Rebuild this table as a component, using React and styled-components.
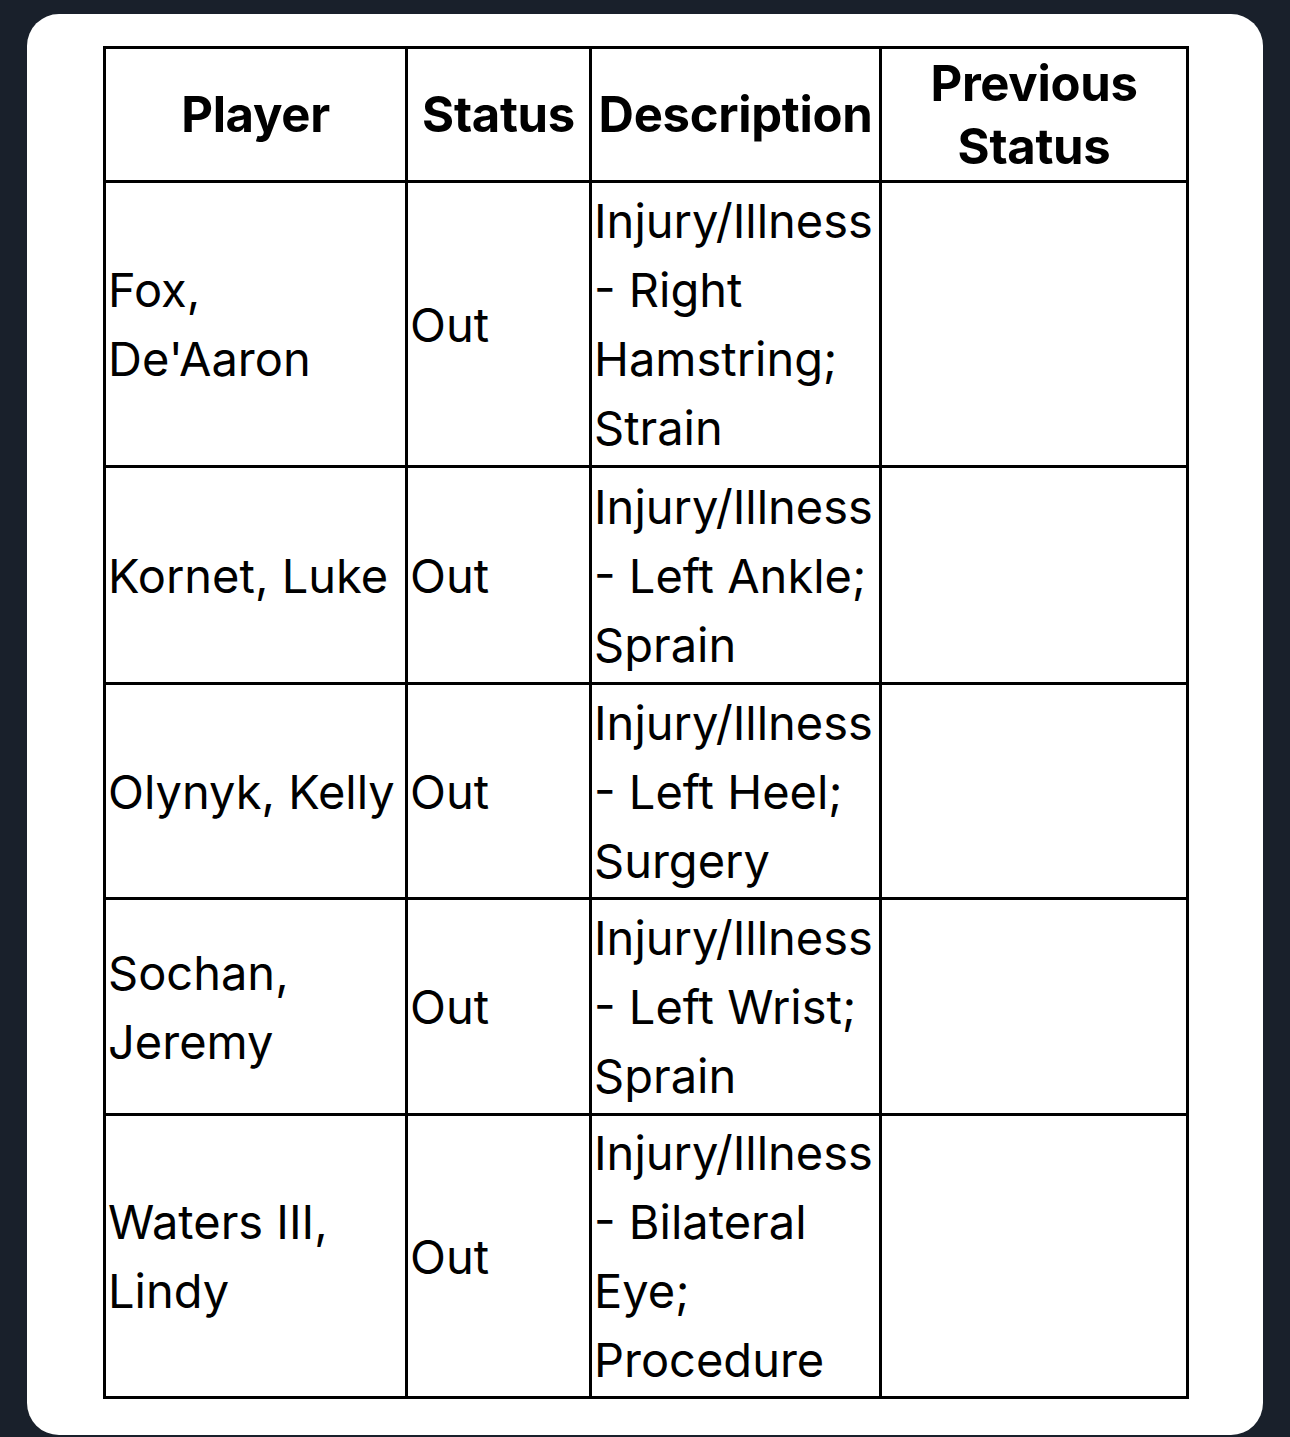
import React from 'react'
import { styled, createGlobalStyle } from 'styled-components'

const rows = [
  { player: ['Fox,', "De'Aaron"], status: 'Out', desc: ['Injury/Illness', '- Right', 'Hamstring;', 'Strain'], height: 285 },
  { player: ['Kornet, Luke'], status: 'Out', desc: ['Injury/Illness', '- Left Ankle;', 'Sprain'], height: 217 },
  { player: ['Olynyk, Kelly'], status: 'Out', desc: ['Injury/Illness', '- Left Heel;', 'Surgery'], height: 215 },
  { player: ['Sochan,', 'Jeremy'], status: 'Out', desc: ['Injury/Illness', '- Left Wrist;', 'Sprain'], height: 216 },
  { player: ['Waters III,', 'Lindy'], status: 'Out', desc: ['Injury/Illness', '- Bilateral', 'Eye;', 'Procedure'], height: 283 },
]

function Lines({ items }) {
  return items.map((t, i) => <Line key={i}>{t}</Line>)
}

function App() {
  return (
    <>
      <GlobalStyle />
      <Page>
        <Card>
          <Table>
            <colgroup>
              <col style={{ width: 302 }} />
              <col style={{ width: 184 }} />
              <col style={{ width: 290 }} />
              <col style={{ width: 307 }} />
            </colgroup>
            <thead>
              <Row $height={134}>
                <Head>Player</Head>
                <Head>Status</Head>
                <Head>Description</Head>
                <Head><Lines items={['Previous', 'Status']} /></Head>
              </Row>
            </thead>
            <tbody>
              {rows.map((r) => (
                <Row key={r.player.join(' ')} $height={r.height}>
                  <Cell><Lines items={r.player} /></Cell>
                  <Cell>{r.status}</Cell>
                  <Cell><Lines items={r.desc} /></Cell>
                  <Cell />
                </Row>
              ))}
            </tbody>
          </Table>
        </Card>
      </Page>
    </>
  )
}

export default App

const GlobalStyle = createGlobalStyle`
  html, body {
    margin: 0;
    background: #19202b;
  }
`
const Page = styled.div`
  height: 1437px;
  overflow: hidden;
  padding: 14px 27px 0 27px;
  box-sizing: border-box;
`
const Card = styled.div`
  background: #fff;
  border-radius: 32px;
  height: 1421px;
  padding: 32px 0 0 76px;
  box-sizing: border-box;
`
const Table = styled.table`
  table-layout: fixed;
  border-collapse: collapse;
  width: 1083px;
  border: 3px solid #000;
  font-family: Inter, "Liberation Sans", sans-serif;
  color: #000;
`
const Row = styled.tr`
  height: ${(p) => p.$height}px;
`
const Head = styled.th`
  border: 3px solid #000;
  padding: 0 1px;
  font-size: 49px;
  font-weight: 700;
  line-height: 63px;
  letter-spacing: -0.3px;
  text-align: center;
  vertical-align: middle;
  white-space: nowrap;
`
const Cell = styled.td`
  border: 3px solid #000;
  padding: 0 2px;
  font-size: 47px;
  font-weight: 400;
  line-height: 69px;
  text-align: left;
  vertical-align: middle;
  white-space: nowrap;
`
const Line = styled.span`
  display: block;
`
